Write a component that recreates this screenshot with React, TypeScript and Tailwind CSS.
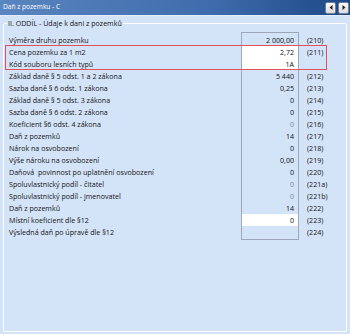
import React from "react";

type Row = { label: string; value?: string; code?: string; input?: boolean; gray?: boolean };

const rows: Row[] = [
  { label: "Výměra druhu pozemku", value: "2 000,00", code: "(210)" },
  { label: "Cena pozemku za 1 m2", value: "2,72", code: "(211)", input: true },
  { label: "Kód souboru lesních typů", value: "1A", input: true },
  { label: "Základ daně § 5 odst. 1 a 2 zákona", value: "5 440", code: "(212)" },
  { label: "Sazba daně § 6 odst. 1 zákona", value: "0,25", code: "(213)" },
  { label: "Základ daně § 5 odst. 3 zákona", value: "0", code: "(214)" },
  { label: "Sazba daně § 6 odst. 2 zákona", value: "0", code: "(215)" },
  { label: "Koeficient §6 odst. 4 zákona", value: "0", code: "(216)", gray: true },
  { label: "Daň z pozemků", value: "14", code: "(217)" },
  { label: "Nárok na osvobození", value: "0", code: "(218)" },
  { label: "Výše nároku na osvobození", value: "0,00", code: "(219)" },
  { label: "Daňová  povinnost po uplatnění osvobození", value: "0", code: "(220)" },
  { label: "Spoluvlastnický podíl - čitatel", value: "0", code: "(221a)", gray: true },
  { label: "Spoluvlastnický podíl - jmenovatel", value: "0", code: "(221b)", gray: true },
  { label: "Daň z pozemků", value: "14", code: "(222)" },
  { label: "Místní koeficient dle §12", value: "0", code: "(223)", input: true },
  { label: "Výsledná daň po úpravě dle §12", value: "", code: "(224)" },
];

export default function App() {
  return (
    <div
      className="w-[350px] h-[334px] bg-[#d3e3f8] overflow-hidden flex flex-col text-[#141414]"
      style={{ fontFamily: '"Open Sans", "Liberation Sans", Arial, sans-serif' }}
    >
      <div className="h-[16px] shrink-0 flex items-center justify-between pl-[3px] pr-[1px] bg-[linear-gradient(to_right,#5985c0,#3f6cac_60%,#1d4888)] border-b border-[#e4edf9]">
        <span className="text-[6.6px] text-white leading-none">Daň z pozemku - C</span>
        <div className="flex gap-[2px]">
          <div className="w-[11px] h-[12px] rounded-[2px] border border-[#6f809b] bg-[linear-gradient(#fafafa,#dcdcdc)] flex items-center justify-center">
            <svg width="4" height="5" viewBox="0 0 4 5"><polygon points="3.5,0 0.5,2.5 3.5,5" fill="#222" /></svg>
          </div>
          <div className="w-[11px] h-[12px] rounded-[2px] border border-[#6f809b] bg-[linear-gradient(#fafafa,#dcdcdc)] flex items-center justify-center">
            <svg width="4" height="5" viewBox="0 0 4 5"><polygon points="0.5,0 3.5,2.5 0.5,5" fill="#222" /></svg>
          </div>
        </div>
      </div>
      <div className="flex-1 px-[3px] pt-[7px] pb-[2px]">
        <div className="relative h-full border border-white rounded-[2px] pt-[8px] pl-[5px] text-[7.1px] leading-[12px]">
          <span className="absolute left-[3px] top-[-7px] bg-[#d3e3f8] px-[1px] leading-[12px]">
            II. ODDÍL - Údaje k dani z pozemků
          </span>
          <div className="flex">
            <div className="w-[232px] pt-[2px]">
              {rows.map((r, i) => (
                <div key={i} className="h-[12px] whitespace-pre">{r.label}</div>
              ))}
            </div>
            <div className="w-[58px] border border-[#9ca8ba] py-[1px]">
              {rows.map((r, i) => (
                <div
                  key={i}
                  className={`h-[12px] text-right pr-[4px] ${r.input ? "bg-white" : ""} ${r.gray ? "text-[#8a8a8a]" : ""}`}
                >
                  {r.value}
                </div>
              ))}
            </div>
            <div className="pl-[8px] pt-[2px]">
              {rows.map((r, i) => (
                <div key={i} className="h-[12px]">{r.code ?? ""}</div>
              ))}
            </div>
          </div>
          <div className="absolute left-[1px] top-[21px] w-[322px] h-[25px] shadow-[inset_0_0_0_1px_#e2505f] pointer-events-none" />
        </div>
      </div>
    </div>
  );
}
